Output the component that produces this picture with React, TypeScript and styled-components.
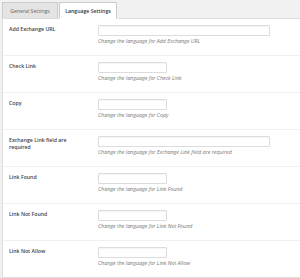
import React from "react";
import styled, { createGlobalStyle } from "styled-components";

const Global = createGlobalStyle`
  html, body { margin: 0; padding: 0; background: #f1f1f1; }
  body { font-family: "Open Sans", "Liberation Sans", sans-serif; width: 300px; height: 278px; overflow: hidden; }
  * { box-sizing: border-box; }
`;

const Page = styled.div`
  padding-top: 1px;
`;

const TabBar = styled.div`
  display: flex;
  align-items: flex-end;
  gap: 1px;
  padding-left: 2px;
  height: 17px;
`;

const Tab = styled.div<{ $active?: boolean }>`
  display: flex;
  align-items: center;
  justify-content: center;
  height: ${(p) => (p.$active ? "17px" : "16px")};
  width: ${(p) => (p.$active ? "58px" : "56px")};
  border: 1px solid #ccc;
  border-bottom: ${(p) => (p.$active ? "1px solid #fff" : "none")};
  margin-bottom: ${(p) => (p.$active ? "-1px" : "0")};
  background: ${(p) => (p.$active ? "#fff" : "#e4e4e4")};
  color: ${(p) => (p.$active ? "#32373c" : "#666")};
  font-size: 5.2px;
  font-weight: ${(p) => (p.$active ? 600 : 400)};
  position: relative;
  z-index: 1;
`;

const Panel = styled.div`
  margin-left: 2px;
  background: #fff;
  border: 1px solid #ddd;
  border-right: none;
`;

const Row = styled.div`
  display: grid;
  grid-template-columns: 95px 1fr;
  height: 37px;
  padding-top: 6px;
  border-bottom: 1px solid #f0f0f0;
  &:last-child { border-bottom: none; height: 36px; }
`;

const Label = styled.div`
  padding-left: 6px;
  width: 78px;
  font-size: 5.2px;
  line-height: 7px;
  font-weight: 600;
  color: #3c4146;
  padding-top: 1px;
`;

const Field = styled.div`
  display: flex;
  flex-direction: column;
  gap: 2px;
`;

const Input = styled.input<{ $wide?: boolean }>`
  width: ${(p) => (p.$wide ? "172px" : "69px")};
  height: 11px;
  border: 1px solid #dcdcdc;
  border-radius: 1px;
  box-shadow: inset 0 1px 1px rgba(0,0,0,0.04);
  padding: 0;
  margin: 0;
  background: #fff;
`;

const Desc = styled.div`
  font-size: 5.3px;
  line-height: 7px;
  font-style: italic;
  color: #777;
`;

const rows = [
  { label: "Add Exchange URL", wide: true },
  { label: "Check Link", wide: false },
  { label: "Copy", wide: false },
  { label: "Exchange Link field are required", wide: true },
  { label: "Link Found", wide: false },
  { label: "Link Not Found", wide: false },
  { label: "Link Not Allow", wide: false },
];

export default function App() {
  return (
    <Page>
      <Global />
      <TabBar>
        <Tab>General Settings</Tab>
        <Tab $active>Language Settings</Tab>
      </TabBar>
      <Panel>
        {rows.map((r) => (
          <Row key={r.label}>
            <Label>{r.label}</Label>
            <Field>
              <Input $wide={r.wide} />
              <Desc>Change the language for {r.label}</Desc>
            </Field>
          </Row>
        ))}
      </Panel>
    </Page>
  );
}
